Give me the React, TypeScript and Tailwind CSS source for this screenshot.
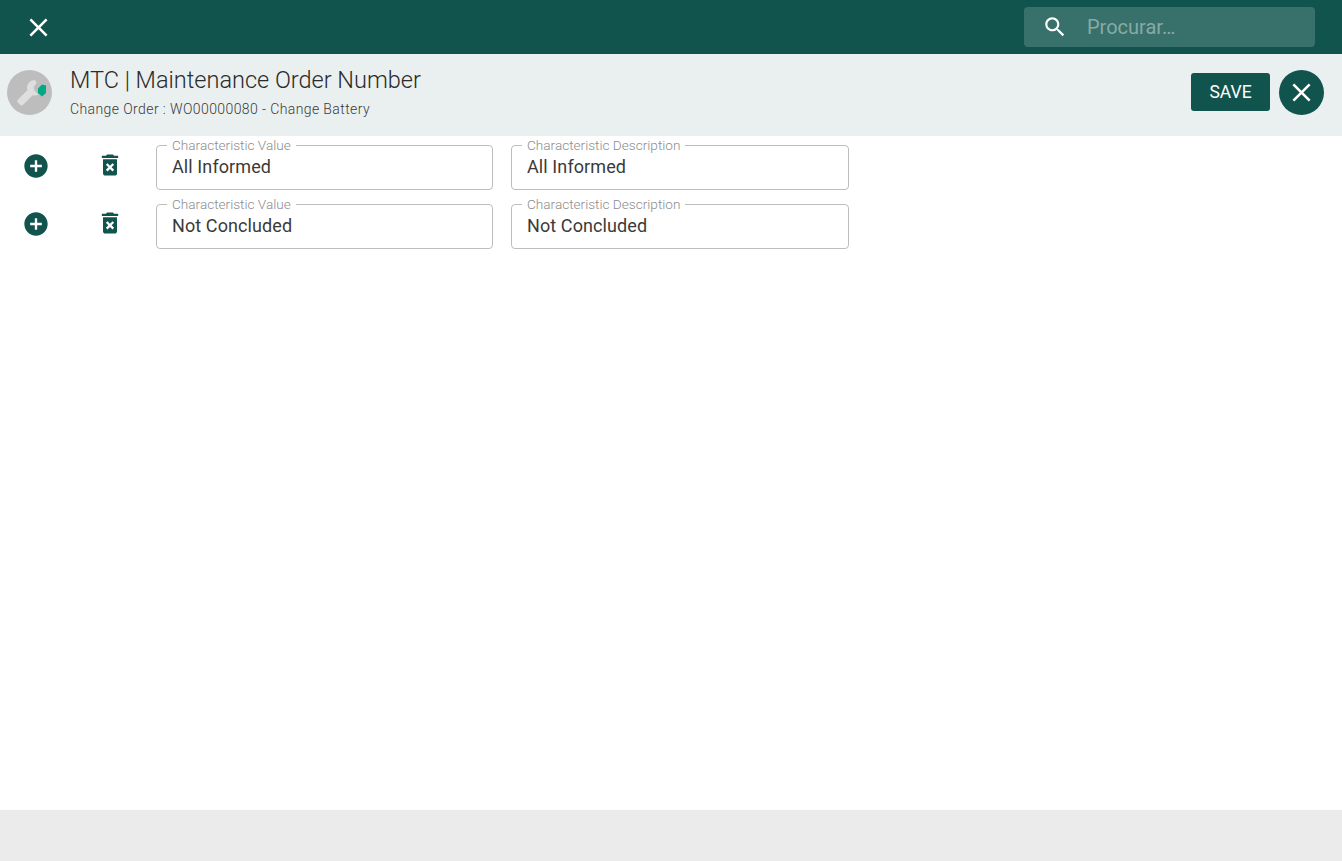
const CLOSE = "M19 6.41L17.59 5 12 10.59 6.41 5 5 6.41 10.59 12 5 17.59 6.41 19 12 13.41 17.59 19 19 17.59 13.41 12z";
const SEARCH = "M15.5 14h-.79l-.28-.27C15.41 12.59 16 11.11 16 9.5 16 5.91 13.09 3 9.5 3S3 5.91 3 9.5 5.91 16 9.5 16c1.61 0 3.09-.59 4.23-1.57l.27.28v.79l5 4.99L20.49 19l-4.99-5zm-6 0C7.01 14 5 11.99 5 9.5S7.01 5 9.5 5 14 7.01 14 9.5 11.99 14 9.5 14z";
const ADD = "M12 2C6.48 2 2 6.48 2 12s4.48 10 10 10 10-4.48 10-10S17.52 2 12 2zm5 11h-4v4h-2v-4H7v-2h4V7h2v4h4v2z";
const TRASH = "M6 19c0 1.1.9 2 2 2h8c1.1 0 2-.9 2-2V7H6v12zm2.46-7.12l1.41-1.41L12 12.59l2.12-2.12 1.41 1.41L13.41 14l2.12 2.12-1.41 1.41L12 15.41l-2.12 2.12-1.41-1.41L10.59 14l-2.13-2.12zM15.5 4l-1-1h-5l-1 1H5v2h14V4z";

function Icon({ d, className }: { d: string; className: string }) {
  return (
    <svg viewBox="0 0 24 24" fill="currentColor" className={className}>
      <path d={d} />
    </svg>
  );
}

function Field({ label, value, width }: { label: string; value: string; width: string }) {
  return (
    <fieldset className={`${width} h-[52px] border border-[#bdbdbd] rounded-[4px] pl-[10px] pr-[14px] min-w-0`}>
      <legend className="px-[5px] text-[13.6px] leading-[14px] text-[#8c8c8c] font-light">{label}</legend>
      <div className="pl-[5px] text-[18px] leading-[24px] text-[#3a3a3a] mt-[3px] tracking-[0.1px]">{value}</div>
    </fieldset>
  );
}

function Row({ value, iconTop, trashTop }: { value: string; iconTop: string; trashTop: string }) {
  return (
    <div className="flex items-start h-[59px]">
      <div className={`w-[71px] h-[52px] flex justify-center ${iconTop}`}>
        <Icon d={ADD} className="w-[28px] h-[28px] text-[#11544e]" />
      </div>
      <div className={`w-[77px] h-[52px] flex justify-center ${trashTop}`}>
        <Icon d={TRASH} className="w-[28px] h-[28px] text-[#11544e]" />
      </div>
      <div className="flex gap-[18px] ml-[8px]">
        <Field label="Characteristic Value" value={value} width="w-[337px]" />
        <Field label="Characteristic Description" value={value} width="w-[338px]" />
      </div>
    </div>
  );
}

export default function App() {
  return (
    <div className="h-[861px] flex flex-col bg-white font-['Roboto',sans-serif] overflow-hidden">
      <header className="h-[54px] shrink-0 bg-[#11544e] flex items-center justify-between pl-[23px] pr-[27px]">
        <Icon d={CLOSE} className="w-[31px] h-[31px] text-white" />
        <div className="w-[291px] h-[40px] rounded-[4px] bg-[#38716b] flex items-center pl-[18px]">
          <Icon d={SEARCH} className="w-[26px] h-[26px] text-white" />
          <span className="ml-[19px] text-[20px] text-[#88aaa6]">Procurar…</span>
        </div>
      </header>
      <div className="h-[82px] shrink-0 bg-[#eaf0f0] flex items-center justify-between pl-[7px] pr-[18px] pb-[6px]">
        <div className="flex items-center">
          <svg viewBox="0 0 45 45" className="w-[45px] h-[45px]">
            <circle cx="22.5" cy="22.5" r="22.5" fill="#bdbdbd" />
            <path d="M28 10c-4.500 0-8 3.500-8 7.500 0 1 .2 1.800.5 2.500L11 29.500c-1 1-1 2.200 0 3.200l2 2c1 1 2.200 1 3.200 0l9.500-9.500c.8.300 1.600.4 2.500.4 2 0 3-1 3-1l-3.500-3.500-1-4 3-4z" fill="#dedede" />
            <path d="M35 14.500l4 1v7.500l-4 3.500-4-3.500v-4.500z" fill="#00a884" />
          </svg>
          <div className="ml-[18px] -mt-[1px]">
            <div className="text-[23.5px] leading-[28px] text-[#2b2b2b] font-light">MTC | Maintenance Order Number</div>
            <div className="text-[14px] leading-[16px] mt-[7px] text-[#3a3a3a] tracking-[0.4px] font-light">Change Order : WO00000080 - Change Battery</div>
          </div>
        </div>
        <div className="flex items-center gap-[9px]">
          <button className="w-[79px] h-[38px] rounded-[3px] bg-[#11544e] text-white text-[17.5px]">SAVE</button>
          <div className="w-[45px] h-[45px] rounded-full bg-[#11544e] flex items-center justify-center">
            <Icon d={CLOSE} className="w-[31px] h-[31px] text-white" />
          </div>
        </div>
      </div>
      <main className="flex-1 pt-[2px]">
        <Row value="All Informed" iconTop="pt-[14px]" trashTop="pt-[13px]" />
        <Row value="Not Concluded" iconTop="pt-[13px]" trashTop="pt-[12px]" />
      </main>
      <footer className="h-[51px] shrink-0 bg-[#ebebeb]" />
    </div>
  );
}
